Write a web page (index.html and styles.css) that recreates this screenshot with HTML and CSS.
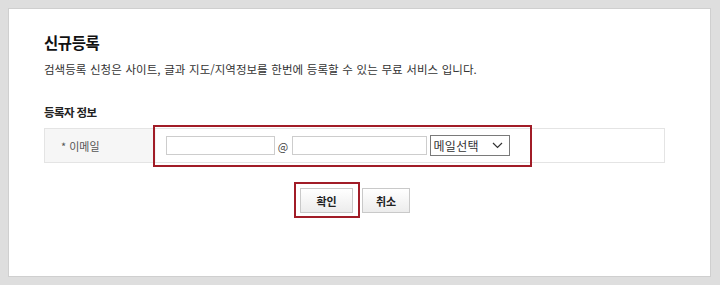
FILE: index.html
```html
<!DOCTYPE html>
<html lang="ko">
<head>
<meta charset="utf-8">
<title>신규등록</title>
<link rel="stylesheet" href="styles.css">
</head>
<body>
<div class="frame">
  <div class="panel">
    <h1 class="title">신규등록</h1>
    <p class="desc">검색등록 신청은 사이트, 글과 지도/지역정보를 한번에 등록할 수 있는 무료 서비스 입니다.</p>
    <h2 class="section">등록자 정보</h2>
    <table class="form">
      <tr>
        <th class="label">* 이메일</th>
        <td class="value">
          <div class="email">
            <span class="input input-id"></span>
            <span class="at">@</span>
            <span class="input input-domain"></span>
            <span class="select">
              <span class="select-text">메일선택</span>
              <svg class="chev" width="11" height="7" viewBox="0 0 11 7"><path d="M1 1 L5.5 5.5 L10 1" fill="none" stroke="#333" stroke-width="1.2"/></svg>
            </span>
          </div>
          <span class="hl hl-email"></span>
        </td>
      </tr>
    </table>
    <div class="actions">
      <span class="btn-wrap">
        <button class="btn btn-ok">확인</button>
        <span class="hl hl-ok"></span>
      </span>
      <button class="btn btn-cancel">취소</button>
    </div>
  </div>
</div>
</body>
</html>
```
FILE: styles.css
```css
* { box-sizing: border-box; }
html, body { margin: 0; padding: 0; }
body {
  width: 720px;
  height: 285px;
  background: #dedede;
  font-family: "Noto Sans CJK KR", "Noto Sans", sans-serif;
  color: #333;
  overflow: hidden;
}
.frame {
  padding: 8px 9px 8px 8px;
  height: 285px;
}
.panel {
  background: #fff;
  border: 1px solid #cfcfcf;
  height: 269px;
  padding: 23px 0 0 35px;
}
.title {
  margin: 0;
  font-size: 15.5px;
  line-height: 20px;
  font-weight: 700;
  color: #111;
  letter-spacing: -0.4px;
}
.desc {
  margin: 8px 0 0;
  font-size: 11.5px;
  line-height: 18px;
  color: #333;
  letter-spacing: 0;
  word-spacing: 0.5px;
}
.section {
  margin: 25px 0 0;
  font-size: 11.5px;
  line-height: 18px;
  font-weight: 700;
  color: #222;
  letter-spacing: -0.6px;
}
.form {
  margin-top: 7px;
  width: 621px;
  border-collapse: collapse;
}
.form th, .form td {
  border-top: 1px solid #e4e4e4;
  border-bottom: 1px solid #e4e4e4;
  height: 34px;
  padding: 0;
}
.label {
  width: 111px;
  background: #f6f6f6;
  border-left: 1px solid #e4e4e4;
  text-align: left;
  padding-left: 16px !important;
  font-weight: 400;
  font-size: 11px;
  color: #555;
}
.value {
  position: relative;
  border-right: 1px solid #e4e4e4;
  padding-left: 10px !important;
}
.email {
  display: flex;
  align-items: center;
}
.input {
  display: block;
  height: 19px;
  border: 1px solid #cdcdcd;
  background: #fff;
}
.input-id { width: 109px; }
.input-domain { width: 135px; }
.at {
  width: 17px;
  text-align: center;
  font-size: 11px;
  color: #444;
}
.select {
  margin-left: 3px;
  width: 80px;
  height: 21px;
  border: 1px solid #7a7a7a;
  display: flex;
  align-items: center;
  justify-content: space-between;
  padding: 0 6px 0 3px;
  font-size: 12px;
  color: #333;
  letter-spacing: 0.3px;
}
.chev { display: block; }
.hl {
  position: absolute;
  border: 2px solid #a11c27;
  pointer-events: none;
}
.hl-email {
  left: -3px;
  top: -4px;
  width: 379px;
  height: 42px;
}
.actions {
  margin-top: 25px;
  display: flex;
  justify-content: center;
  gap: 9px;
  padding-right: 44px;
}
.btn-wrap { position: relative; display: block; }
.btn {
  display: block;
  height: 25px;
  border: 1px solid #c9c9c9;
  background: linear-gradient(#ffffff, #ececec);
  font-family: "Noto Sans CJK KR", sans-serif;
  font-weight: 700;
  font-size: 11px;
  color: #222;
  padding: 0;
}
.btn-ok { width: 53px; }
.btn-cancel { width: 48px; }
.hl-ok {
  left: -6px;
  top: -6px;
  width: 66px;
  height: 36px;
}
```
